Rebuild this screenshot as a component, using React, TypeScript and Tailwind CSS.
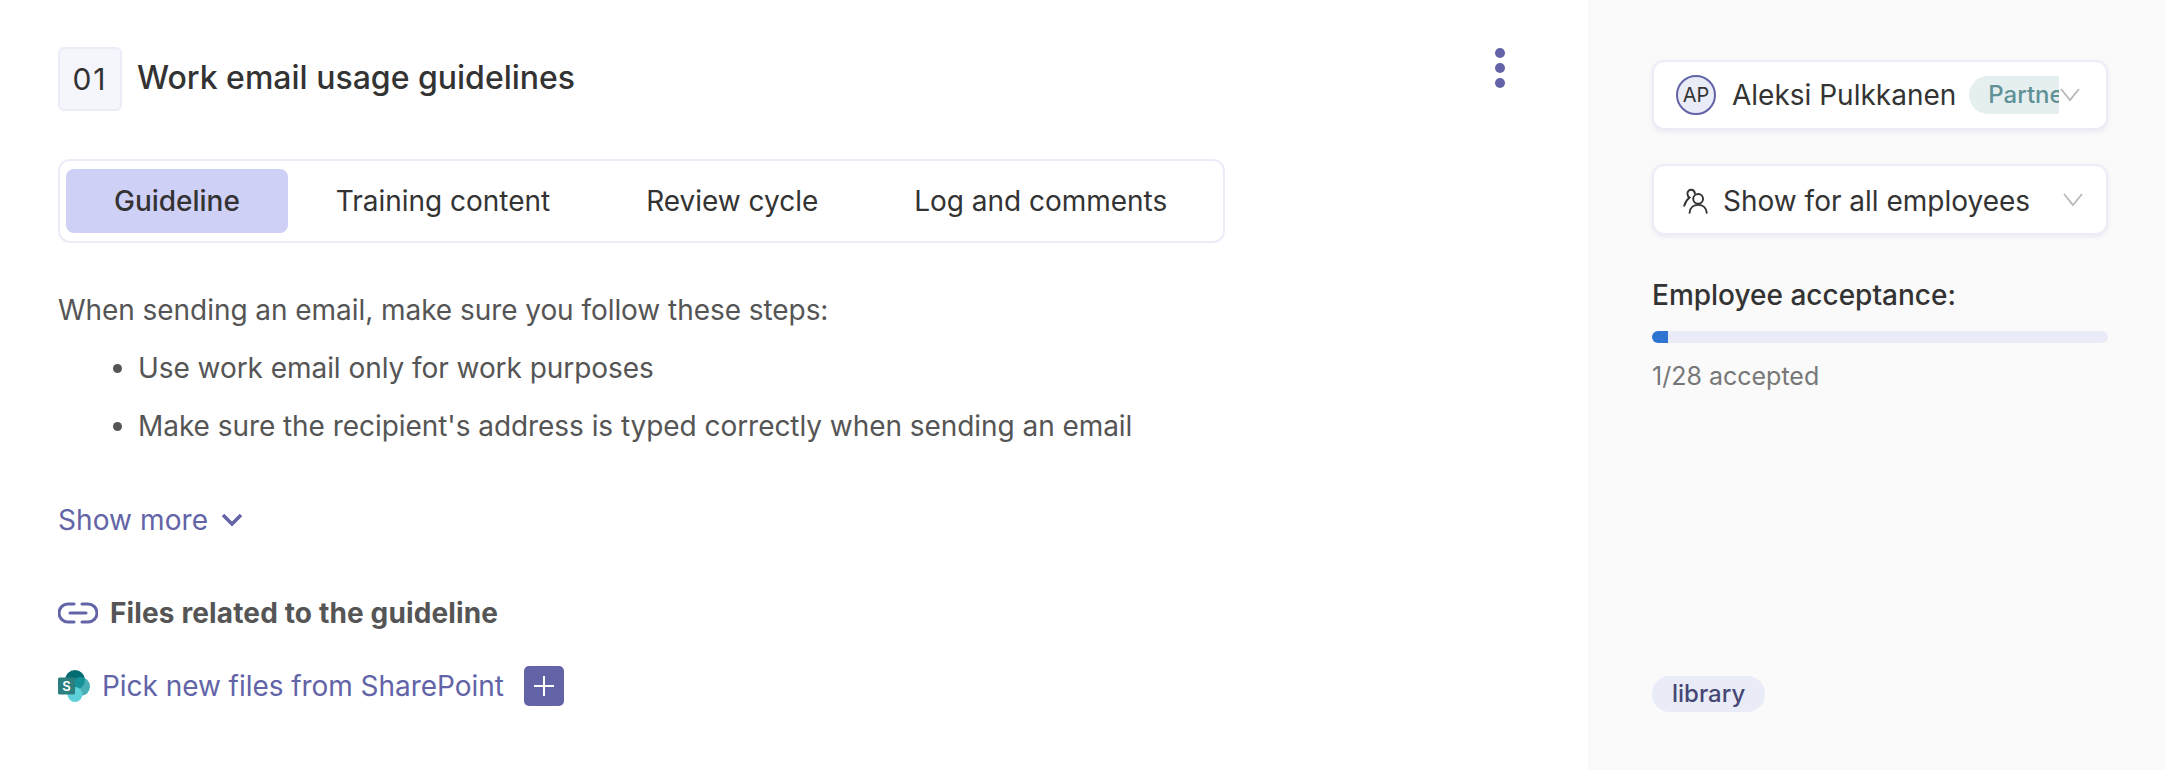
function ChevronThin({ className = '' }: { className?: string }) {
  return (
    <svg width="22" height="16" viewBox="0 0 22 16" fill="none" stroke="#b8b8b8" strokeWidth="1.8" className={'shrink-0 ' + className}>
      <path d="M2 2l9 11 9-11" />
    </svg>
  );
}

function SharePointLogo() {
  return (
    <svg width="32" height="32" viewBox="0 0 32 32" className="shrink-0">
      <circle cx="17" cy="10" r="10" fill="#036c70" />
      <circle cx="22.500" cy="16.500" r="9.500" fill="#1a9ba1" opacity="0.8" />
      <circle cx="17" cy="24.500" r="7.500" fill="#5ed0da" />
      <rect x="0" y="7.500" width="17" height="17" rx="1.500" fill="#2b7f7f" />
      <text x="8.500" y="21" textAnchor="middle" fontSize="13" fontWeight="600" fill="#fff" fontFamily="Inter, sans-serif">S</text>
    </svg>
  );
}

function PeopleIcon() {
  return (
    <svg width="30" height="30" viewBox="0 0 28 28" fill="none" stroke="#333" strokeWidth="1.8" strokeLinecap="round" className="shrink-0">
      <circle cx="16" cy="12" r="4.600" />
      <path d="M8 25c.4-4.600 3.600-7.400 8-7.400s7.600 2.800 8 7.400" />
      <path d="M13 6.800C12.600 4.800 11.200 3.500 9.500 3.500 7.500 3.500 6 5.200 6 7.200c0 1.600.8 2.900 2 3.600C5.700 12.500 4 15 3 18.500" />
    </svg>
  );
}

export default function App() {
  const tabs = ['Guideline', 'Training content', 'Review cycle', 'Log and comments'];

  return (
    <div className="flex h-[770px] w-[2166px] bg-white font-['Inter',sans-serif] overflow-hidden">
      {/* Main */}
      <div className="w-[1588px] shrink-0 pl-[58px] pr-[80px] pt-[47px] relative">
        <div className="flex items-center gap-[15px]">
          <div className="w-[64px] h-[64px] rounded-[6px] bg-[#f5f6fc] border-2 border-[#ebecf8] flex items-center justify-center text-[30px] text-[#333] tracking-[2px]">
            01
          </div>
          <h1 className="pb-[2px] text-[32px] font-medium text-[#333]">Work email usage guidelines</h1>
        </div>
        <div className="absolute left-[1495px] top-[48px] flex flex-col gap-[5px]">
          <span className="w-[10px] h-[10px] rounded-full bg-[#6264a7]" />
          <span className="w-[10px] h-[10px] rounded-full bg-[#6264a7]" />
          <span className="w-[10px] h-[10px] rounded-full bg-[#6264a7]" />
        </div>

        {/* Tabs */}
        <div className="mt-[48px] w-[1167px] h-[84px] border-2 border-[#ebecf8] rounded-[12px] flex items-center pl-[6px] tracking-[-0.02px]">
          {tabs.map((t, i) => (
            <div
              key={t}
              className={
                i === 0
                  ? 'h-[64px] px-[48px] rounded-[8px] bg-[#cfd0f6] flex items-center text-[28px] font-medium text-[#333]'
                  : 'h-[64px] px-[48px] flex items-center text-[28px] text-[#333]'
              }
            >
              {t}
            </div>
          ))}
        </div>

        {/* Body */}
        <p className="mt-[46px] text-[28px] leading-[42px] text-[#555] tracking-[-0.055px]">When sending an email, make sure you follow these steps:</p>
        <ul className="list-disc pl-[80px] text-[28px] leading-[42px] text-[#555] marker:text-[#555] tracking-[-0.055px]">
          <li className="mt-[16px]">Use work email only for work purposes</li>
          <li className="mt-[16px]">Make sure the recipient's address is typed correctly when sending an email</li>
        </ul>

        <div className="mt-[52px] flex items-center gap-[13px] text-[28px] text-[#6264a7] tracking-[0.1px]">
          Show more
          <svg width="22" height="14" viewBox="0 0 22 14" fill="none" stroke="#6264a7" strokeWidth="3.400">
            <path d="M2 2l9 9 9-9" />
          </svg>
        </div>

        <div className="mt-[51px] flex items-center gap-[12px] text-[28px] font-bold text-[#555] tracking-[0.14px]">
          <svg width="40" height="24" viewBox="0 0 40 24" fill="none" stroke="#6264a7" strokeWidth="3" strokeLinecap="round" className="shrink-0">
            <path d="M16 3H10a9 9 0 0 0 0 18h6" />
            <path d="M24 3h6a9 9 0 0 1 0 18h-6" />
            <path d="M12 12h16" />
          </svg>
          Files related to the guideline
        </div>

        <div className="mt-[31px] flex items-center text-[28px] text-[#6264a7] tracking-[-0.05px]">
          <SharePointLogo />
          <span className="ml-[12px]">Pick new files from SharePoint</span>
          <span className="ml-[20px] w-[40px] h-[40px] rounded-[5px] bg-[#6264a7] flex items-center justify-center">
            <svg width="24" height="24" viewBox="0 0 24 24" stroke="#fff" strokeWidth="2">
              <path d="M12 2v20M2 12h20" />
            </svg>
          </span>
        </div>
      </div>

      {/* Side panel */}
      <div className="flex-1 bg-[#fafafa] pl-[64px] pr-[58px] pt-[60px] flex flex-col">
        <div className="h-[70px] rounded-[12px] bg-white border-2 border-[#ebecf8] shadow-[0_2px_4px_rgba(98,100,167,0.1)] flex items-center pl-[22px] pr-[22px]">
          <span className="w-[40px] h-[40px] rounded-full bg-[#e9ebf7] border-2 border-[#6264a7] flex items-center justify-center text-[20px] text-[#333] shrink-0">
            AP
          </span>
          <span className="ml-[16px] text-[28px] text-[#333] whitespace-nowrap">Aleksi Pulkkanen</span>
          <span className="ml-[13px] h-[38px] w-[90px] rounded-l-full bg-[#e6eff0] overflow-hidden flex items-center pl-[19px] text-[24px] font-medium text-[#5f9196] whitespace-nowrap shrink-0">
            Partner
          </span>
          <ChevronThin />
        </div>

        <div className="mt-[34px] h-[71px] rounded-[12px] bg-white border-2 border-[#ebecf8] shadow-[0_2px_4px_rgba(98,100,167,0.1)] flex items-center pl-[27px] pr-[22px] pt-[3px]">
          <PeopleIcon />
          <span className="ml-[12px] text-[28px] text-[#333] whitespace-nowrap flex-1">Show for all employees</span>
          <ChevronThin className="mb-[3px]" />
        </div>

        <div className="mt-[42px] text-[28px] font-medium text-[#333] leading-[36px]">Employee acceptance:</div>
        <div className="mt-[18px] h-[12px] rounded-full bg-[#e9ebf7] overflow-hidden">
          <div className="h-full w-[16px] bg-[#2f74d0]" />
        </div>
        <div className="mt-[17px] text-[25px] text-[#777] leading-[32px]">1/28 accepted</div>

        <div className="mt-auto mb-[58px] self-start h-[36px] px-[20px] rounded-full bg-[#e9ebf7] flex items-center text-[24px] font-medium text-[#464775]">
          library
        </div>
      </div>
    </div>
  );
}
